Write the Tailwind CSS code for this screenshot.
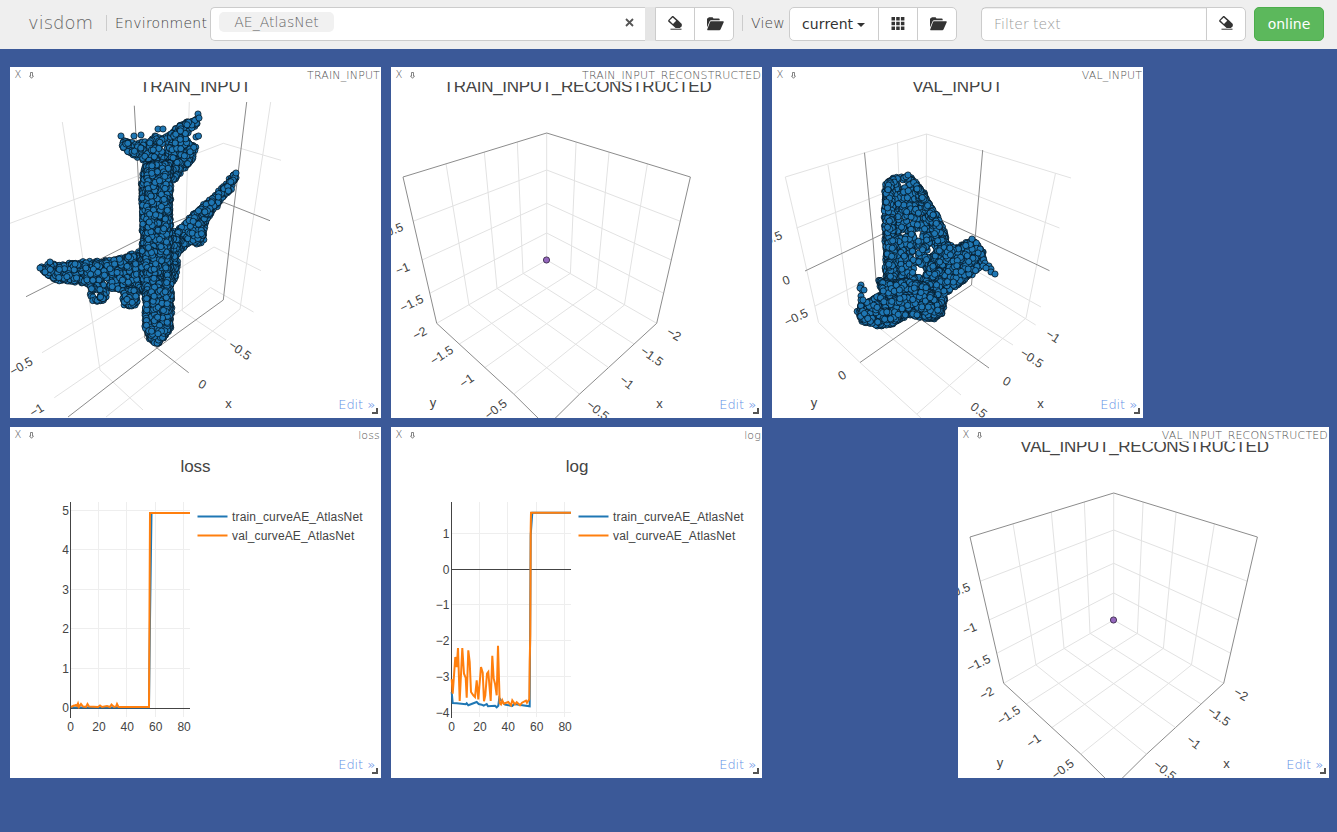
<!DOCTYPE html>
<html lang="en">
<head>
<meta charset="utf-8">
<title>visdom</title>
<script src="https://cdn.jsdelivr.net/npm/@tailwindcss/browser@4"></script>
</head>
<body class="bg-[#3b5998] h-[832px] overflow-hidden font-['DejaVu_Sans',sans-serif] font-extralight text-[14px] text-[#333]">
<svg class="hidden">
  <symbol id="eraser" viewBox="0 0 14 14"><path d="M5.200 0 10 4.300 13.800 8V10.300L11.800 12H7.600L.2 5.400V4.200L4.200 0ZM4.700 1.500 1.500 4.600 5 7.900 8.200 4.700Z" fill="#333" fill-rule="evenodd"/><path d="M2.500 12.700H13.500V13.700H2.500Z" fill="#333"/></symbol>
  <symbol id="folder" viewBox="0 0 18 14"><path d="M1 10.500V1.800Q1 1.200 1.600 1.200H2L2.800.3H6.600L7.500 1.500H12.600Q13.700 1.500 13.700 2.500V3.300H5.200Q4 3.300 3.500 4.500Z" fill="#333"/><path d="M4.900 4.300H17.200Q18.100 4.300 17.700 5.300L14.600 12.300Q14.200 13.200 13.300 13.200H1.600Q.9 13.200 1.300 12.200L4 5Q4.300 4.300 4.900 4.300Z" fill="#333"/></symbol>
  <symbol id="grid" viewBox="0 0 14 14"><path d="M.5 1h3.500v3.500h-3.500zM5.200 1h3.500v3.500h-3.500zM9.900 1h3.500v3.500h-3.500zM.5 5.700h3.500v3.500h-3.500zM5.200 5.700h3.500v3.500h-3.500zM9.900 5.700h3.500v3.500h-3.500zM.5 10.400h3.500v3.500h-3.500zM5.200 10.400h3.500v3.500h-3.500zM9.900 10.400h3.500v3.500h-3.500z" fill="#333"/></symbol>
</svg>

<nav class="h-[49px] bg-[#efefef] flex items-start pt-[7px] pl-[28px]">
  <div class="w-[78px] text-[18px] leading-[31px] text-[#666]">visdom</div>
  <div class="w-px h-4 mt-2 bg-[#ccc]"></div>
  <div class="w-[103px] pl-2 leading-[32px] tracking-[0.25px] text-[#444] whitespace-nowrap">Environment</div>
  <div class="w-[435px] h-[34px] bg-white border border-r-0 border-[#ccc] rounded-l-[5px] flex justify-between">
    <span class="mt-1 ml-2 h-5 w-[115px] bg-[#f1f1f1] rounded-[5px] text-center leading-5 text-[#666]">AE_AtlasNet</span>
    <svg class="w-[9px] h-[9px] mt-[10px] mr-[11px]" viewBox="0 0 9 9"><path d="M1 1 8 8M8 1 1 8" stroke="#555" stroke-width="1.800"/></svg>
  </div>
  <div class="w-[10px] h-[34px] bg-[#e5e5e5]"></div>
  <div class="flex h-[34px] w-[79px] bg-white border border-[#ccc] rounded-r-[5px]">
    <div class="w-[39px] border-r border-[#ccc] flex justify-center pt-2"><svg class="w-[14px] h-[14px]"><use href="#eraser"/></svg></div>
    <div class="flex-1 flex justify-center pt-[9px] pl-[2px]"><svg class="w-[18px] h-[14px]"><use href="#folder"/></svg></div>
  </div>
  <div class="w-px h-4 mt-2 ml-2 bg-[#ccc]"></div>
  <div class="w-[46px] pl-2 leading-[32px] tracking-[0.15px] text-[#444]">View</div>
  <div class="flex h-[34px] w-[168px] bg-white border border-[#ccc] rounded-[5px]">
    <div class="w-[89px] border-r border-[#ccc] flex items-center pl-3 font-normal tracking-[0.1px]">current<span class="ml-1 mt-[2px] border-x-4 border-x-transparent border-t-4 border-t-[#333]"></span></div>
    <div class="w-[39px] border-r border-[#ccc] flex justify-center pt-2"><svg class="w-[14px] h-[14px]"><use href="#grid"/></svg></div>
    <div class="flex-1 flex justify-center pt-[9px] pl-[2px]"><svg class="w-[18px] h-[14px]"><use href="#folder"/></svg></div>
  </div>
  <div class="flex h-[34px] w-[265px] ml-6 bg-white border border-[#ccc] rounded-[5px]">
    <div class="w-[225px] border-r border-[#ccc] pl-3 leading-[32px] text-[#999] shadow-[inset_0_1px_1px_rgba(0,0,0,0.075)]">Filter text</div>
    <div class="flex-1 flex justify-center pt-2"><svg class="w-[14px] h-[14px]"><use href="#eraser"/></svg></div>
  </div>
  <div class="h-[34px] w-[70px] ml-2 bg-[#5cb85c] border border-[#4cae4c] rounded-[5px] text-white text-center leading-[32px] font-normal">online</div>
</nav>

<main class="pl-[10px] pt-[18px] flex flex-col gap-[9px]">
  <div class="flex gap-[10px]">
    <section class="pane w-[371px] h-[351px] bg-white grid overflow-hidden" data-name="TRAIN_INPUT" data-kind="train"></section>
    <section class="pane w-[371px] h-[351px] bg-white grid overflow-hidden" data-name="TRAIN_INPUT_RECONSTRUCTED" data-kind="cube"></section>
    <section class="pane w-[371px] h-[351px] bg-white grid overflow-hidden" data-name="VAL_INPUT" data-kind="val"></section>
  </div>
  <div class="flex gap-[10px]">
    <section class="pane w-[371px] h-[351px] bg-white grid overflow-hidden" data-name="loss" data-kind="loss"></section>
    <section class="pane w-[371px] h-[351px] bg-white grid overflow-hidden" data-name="log" data-kind="log"></section>
    <section class="pane w-[371px] h-[351px] bg-white grid overflow-hidden ml-[186px]" data-name="VAL_INPUT_RECONSTRUCTED" data-kind="cube"></section>
  </div>
</main>

<script>
let seed = 7;
const rnd = () => (seed = (seed * 16807) % 2147483647) / 2147483647;
const line = (pts, c, w = 1) => `<polyline points="${pts}" fill="none" stroke="${c}" stroke-width="${w}"/>`;
const dark = p => line(p, '#8c8c8c'), light = p => line(p, '#e2e2e2');
const label = (t, x, y, r = 0, s = 12.4) => `<text transform="translate(${x} ${y}) rotate(${r})" y="4.500" text-anchor="middle" font-size="${s}" fill="#444">${t}</text>`;
const title = (t, x, y, ls = 0) => `<text x="${x}" y="${y}" text-anchor="middle" font-size="17" letter-spacing="${ls}" fill="#444">${t}</text>`;
const dot = (x, y, c = '#1f77b4') => `<circle cx="${x.toFixed(1)}" cy="${y.toFixed(1)}" r="3.100" fill="${c}" stroke="#04111b" stroke-width=".75"/>`;

function inside(x, y, p) {
  let r = false;
  for (let i = 0, j = p.length - 1; i < p.length; j = i++)
    if ((p[i][1] > y) !== (p[j][1] > y) && x < (p[j][0] - p[i][0]) * (y - p[i][1]) / (p[j][1] - p[i][1]) + p[i][0]) r = !r;
  return r;
}
function cloud(str, n, holes = []) {
  const p = str.split(' ').map(s => s.split(',').map(Number));
  const xs = p.map(a => a[0]), ys = p.map(a => a[1]);
  const x0 = Math.min(...xs), x1 = Math.max(...xs), y0 = Math.min(...ys), y1 = Math.max(...ys);
  let out = '';
  // outline points first, so the interior is drawn over them
  for (let i = 0, j = p.length - 1; i < p.length; j = i++) {
    const d = Math.hypot(p[i][0] - p[j][0], p[i][1] - p[j][1]), k = Math.ceil(d / 3.2);
    for (let q = 0; q < k; q++) {
      const t = (q + rnd() * .8) / k;
      out += dot(p[j][0] + (p[i][0] - p[j][0]) * t + (rnd() - .5) * 2.2, p[j][1] + (p[i][1] - p[j][1]) * t + (rnd() - .5) * 2.2);
    }
  }
  while (n > 0) {
    const x = x0 + rnd() * (x1 - x0), y = y0 + rnd() * (y1 - y0);
    if (!inside(x, y, p)) continue;
    n--;
    if (holes.some(h => Math.hypot(x - h[0], y - h[1]) < h[2])) continue;
    out += dot(x, y);
  }
  return out;
}
const dots = s => s.split(' ').map(q => dot(...q.split(',').map(Number))).join('');

const draw = {
  train: () => ({ box: '10 67 371 351', body:
    title('TRAIN_INPUT', 195.5, 92) +
    light('62.300,122 80,240 100,370 143,410') + light('189.300,102 186,215 183,250 182.300,311 226,340') +
    light('270.700,102 250,240 240,309 106,417') + light('10,223.300 138,176 223.300,143.300 281,160.300') +
    light('261,270.700 214,247 180,268 125,303 42,352.700') + light('253.500,312 210.500,287.500 175,315 54.300,397.700') +
    dark('134.300,105.700 138.700,185 144.700,338 157,348') + dark('246.700,102 230,240 223.300,300 157,348 68,417') +
    dark('157,348 188.700,372.700') + dark('270,220.700 224,202.500 173,223 142,238 26,296.700') +
    label('−0.5', 21, 366, -30) + label('−1', 36.5, 410, -32) + label('0', 202.5, 384, 30) + label('−0.5', 240, 350, 35) + label('x', 228.5, 403, 0, 13) +
    dots('158,129 163,129 121,136 134,136 141,135 155,136') +
    cloud('123,140 128,142 135,145 142,141 148,143 155,137 164,139 170,134 171,160 150,162 140,157 127,152 122,146', 120) +
    cloud('170,134 174,130 180,125 187,122 194,121 196,119 197,123 193,127 184,135 188,142 193,146 195,148 194,153 190,162 182,170 173,181 168,165', 200) +
    cloud('235,173 236,177 230,189 218,203 207,220 203,236 203,241 197,243 190,242 180,250 171,262 171,233 179,229 187,222 195,213 205,205 217,194 228,182', 360) +
    cloud('42,268 51,264 60,266 70,264 78,263 100,262 120,259 135,254 145,251 145,291 125,291 108,288 95,286 80,282 70,280 58,280 47,275', 480) +
    cloud('91,287 91,296 95,301 99,301 106,299 106,294 102,290', 20) +
    cloud('123,290 124,304 130,307 136,305 137,290', 40) +
    cloud('168,235 178,240 176,272 174,281 169,285', 70) +
    cloud('145,165 142,185 143,240 141,262 146,300 146,327 150,338 156,344 162,340 170,328 171,305 171,275 170,240 170,185 171,162', 1900) +
    cloud('148,165 146,330 156,343 168,330 167,165', 200) +
    dots('196,137 198.500,136 198,114 199,118 236,173 40,268 50,262 75,264') }),

  cube: name => {
    let s = '';
    const m = x => 1093.4 - x;
    for (const f of [x => x, m]) {
      const P = a => a.map(q => f(q[0]) + ',' + q[1]).join(' ');
      const L = (...a) => s += light(P(a));
      L([517.3,142],[523,273.3],[634,344]); L([484.3,152],[497,288.3],[608.7,367.7]); L([446,163.7],[469,305],[579.3,394]);
      L([546.7,170],[413,221.3]); L([546.7,203.3],[422,260]); L([546.7,233],[430.3,293]); L([546.7,260],[436.7,323.3]);
    }
    s += light('546.700,133 546.700,260');
    for (const f of [x => x, m]) s += dark([[546.7,133],[403,177],[436.7,323.3],[485,367.7],[513.7,394],[540,420]].map(q => f(q[0]) + ',' + q[1]).join(' '));
    return { box: '391 67 371 351', body: title(name, 577.5, 92, -.28) + s +
      '<circle cx="546.500" cy="260" r="3.100" fill="#9467bd" stroke="#3b2a4b" stroke-width=".9"/>' +
      label('−0.5', 391, 230.5, -22) + label('−1', 402.5, 268.5, -22) + label('−1.5', 411.5, 303, -26) + label('−2', 419.5, 333, -28) +
      label('−1.5', 441.5, 355, -33) + label('−1', 466.5, 380.500, -35) + label('−0.5', 495.5, 409, -38) + label('y', 433, 402, 0, 13) +
      label('−2', 674, 334, 30) + label('−1.5', 652, 356, 35) + label('−1', 627, 382, 38) + label('−0.5', 598, 410, 38) + label('x', 659.5, 403, 0, 13) };
  },

  val: () => ({ box: '772 67 371 351', body:
    title('VAL_INPUT', 957.5, 92, -.1) +
    light('785.300,177 926.500,134 1071,178') + light('785.300,177 800,240 818.500,322.500 860,362.500 921,418') +
    light('828,165 840,240 849,305 882,330 961,395') + light('897.500,143 899,180') + light('926.500,134 926,240') +
    light('796.700,228 926.500,176 1059.500,228') + light('1055.500,173.300 1041.700,240 1026,318 917,414') +
    light('815,306 865,281') + light('960,262 1041,307') + light('971.500,285 1035.700,325') + light('945,302 1013,345') +
    dark('864.500,152.700 873,240 876,280') + dark('982.700,150 975,240 971.500,285 946,302 922,319 860,362.500') +
    dark('922,320 989,368') + dark('805,271 870,240 926,213 985,240 1049.500,270.700') +
    label('0.5', 773.5, 237.5, -22) + label('0', 786, 280, -22) + label('−0.5', 796, 317, -26) + label('0', 842, 375, -33) + label('y', 814, 402, 0, 13) +
    label('−1', 1053, 336, 33) + label('−0.5', 1032, 358, 33) + label('0', 1007, 381, 30) + label('0.5', 979, 410, 38) + label('x', 1040.5, 403, 0, 13) +
    cloud('887,183 893,178 901,178 908,176 913,180 921,190 928,201 935,214 940,224 945,235 948,252 944,290 888,290 886,270 885,196', 800, [[905,184,3.6],[918,234,4.6],[903,234,4],[914,256,3.6],[920,271,6.5],[930,253,3.6]]) +
    cloud('885,200 888,183 891,181 894,240 894,290 888,287', 90) +
    cloud('914,182 921,190 927,201 936,214 943,236 946,250 938,248 928,215', 70) +
    cloud('938,249 948,245 957,248 965,244 972,241 977,243 982,250 984,259 980,268 960,283 945,293 942,312 935,318 928,318 920,290', 780) +
    cloud('878,279 882,281 888,284 905,281 925,285 935,300 942,312 935,317 927,318 908,315 890,325 875,325 861,320 858,312 861,304 870,301 878,296 884,294 881,287', 900) +
    dots('861,285 862,290 860,288 864,290 861,296 861,300 863,300 985,263 983,266 989,266 991,269 986,268 991,272 995,274 908,175 972,239') }),

  loss: () => {
    const X = v => 70.5 + v * 1.42, Y = v => 708.3 - v * 39.5;
    let s = title('loss', 195.5, 472);
    for (const v of [20,40,60,80]) s += line(`${Math.round(X(v))-.5},502 ${Math.round(X(v))-.5},717`, '#eee');
    for (const v of [1,2,3,4,5]) s += line(`70,${Math.round(Y(v))-.5+.0} 190,${Math.round(Y(v))-.5}`, '#eee');
    s += line('70.500,502 70.500,718', '#444') + line('70,708.500 190,708.500', '#444');
    s += line('71,707 73,707.500 88,707.500 149,707.500 150,620 151.500,513 190,513', '#1f77b4', 2);
    s += line('71,707 74,705.500 75,705.500 76,705 77,706 78,703.500 79,707 81,704 83,706.500 86,707 87.500,704 89,706.500 98,707 100,705.500 102,707 107,706 110,707 111.500,704.500 114,707 116,706.500 117,704 118.500,707 149,707 150,513 190,513', '#ff7f0e', 2);
    return { box: '10 427 371 351', body: s + ticks(X, Y, [0,1,2,3,4,5], 69) + legend(197.5) };
  },
  log: () => {
    const X = v => 451.5 + v * 1.42, Y = v => 569.5 - v * 35.8;
    let s = title('log', 577, 472);
    for (const v of [20,40,60,80]) s += line(`${Math.round(X(v))-.5},502 ${Math.round(X(v))-.5},717`, '#eee');
    for (const v of [1,-1,-2,-3,-4]) s += line(`451,${Math.round(Y(v))-.5} 571,${Math.round(Y(v))-.5}`, '#eee');
    s += line('451.500,502 451.500,718', '#444') + line('451,569.500 571,569.500', '#444');
    const C = a => a.split(' ').map(q => { const [x, y] = q.split(','); return (390 + x / 3).toFixed(1) + ',' + (422 + y / 3).toFixed(1); }).join(' ');
    s += line(C('185,810 188,843 200,844 227,847 230,844 235,850 260,840 266,846 275,848 281,851 290,846 294,853 315,851 320,856 325,851 328,828 333,835 345,848 367,852 372,846 419,853 422,340 427,272 543,272'), '#1f77b4', 2);
    s += line(C('185,772 188,815 196,705 200,735 204,678 209,837 217,678 222,755 227,768 230,827 235,685 239,720 243,810 250,820 255,825 260,775 265,832 273,735 278,752 282,838 286,820 291,755 295,750 302,837 307,701 311,770 315,785 320,820 324,671 329,843 333,847 337,835 341,845 349,842 355,840 363,850 367,835 375,847 380,841 390,850 396,842 408,836 411,842 418,832 419,720 421,640 422,320 423,272 543,272'), '#ff7f0e', 2);
    return { box: '391 427 371 351', body: s + ticks(X, Y, [1,0,-1,-2,-3,-4], 449.5) + legend(578.5) };
  }
};
function ticks(X, Y, ys, rx) {
  return [0,20,40,60,80].map(v => `<text x="${X(v)}" y="731" text-anchor="middle" font-size="12" fill="#444">${v}</text>`).join('') +
    ys.map(v => `<text x="${rx}" y="${Y(v) + 4}" text-anchor="end" font-size="12" fill="#444">${String(v).replace('-', '−')}</text>`).join('');
}
function legend(x) {
  return line(`${x},516.500 ${x + 30},516.500`, '#1f77b4', 2) + line(`${x},535.500 ${x + 30},535.500`, '#ff7f0e', 2) +
    `<text x="${x + 34.5}" y="521" font-size="12" letter-spacing=".15" fill="#444">train_curveAE_AtlasNet</text><text x="${x + 34.5}" y="540" font-size="12" letter-spacing=".15" fill="#444">val_curveAE_AtlasNet</text>`;
}

document.querySelectorAll('.pane').forEach(p => {
  const { box, body } = draw[p.dataset.kind](p.dataset.name);
  p.innerHTML = `
    <svg class="col-start-1 row-start-1 w-[371px] h-[351px] font-['Liberation_Sans',Arial,sans-serif] font-normal" viewBox="${box}">${body}</svg>
    <div class="col-start-1 row-start-1 relative flex flex-col justify-between">
      <header class="h-[15px] bg-white flex justify-between text-[11px] leading-[17px] text-[#555] pl-[5px] pr-px">
        <span class="flex gap-[8px] text-[10px] leading-[16px]"><span class="w-[6px] -ml-[0.5px]">X</span><svg class="w-[5px] h-[7px] mt-[5px]" viewBox="0 0 5 7"><path d="M1.500.5H3.500V4H4.500L2.500 6.300.5 4H1.500Z" fill="none" stroke="#666" stroke-width=".8"/></svg></span><span class="tracking-[0.15px]">${p.dataset.name}</span>
      </header>
      <footer class="flex justify-end items-end h-[30px] pr-[3px] pb-1">
        <span class="text-[13px] leading-[18px] text-[#5f8fe6] tracking-[-0.1px]">Edit »</span>
        <span class="w-[6px] h-[6px] -ml-[3px] border-r-2 border-b-2 border-[#555]"></span>
      </footer>
    </div>`;
});
</script>
</body>
</html>
